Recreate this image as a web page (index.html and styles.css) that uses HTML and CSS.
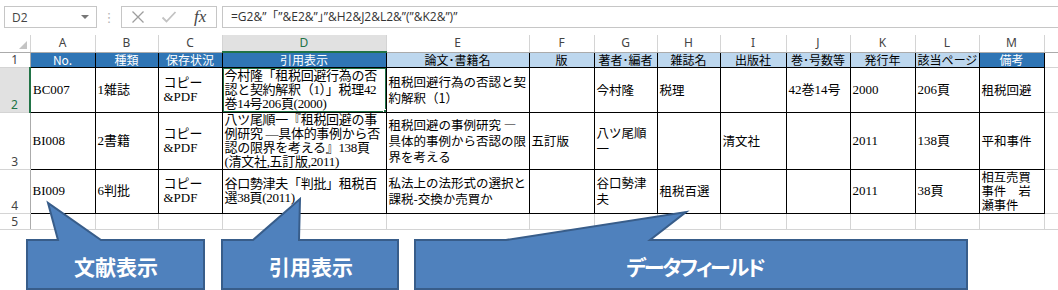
FILE: index.html
```html
<!DOCTYPE html>
<html lang="ja">

<head>
    <meta charset="UTF-8">
    <title>文献リスト - 引用表示</title>
    <link rel="stylesheet" href="styles.css">
</head>

<body>
    <div class="formula-bar">
        <div class="name-box"><span>D2</span><span class="name-arrow"></span></div>
        <div class="grip">⋮</div>
        <div class="fx-box">
            <svg class="icon-x" width="14" height="14" viewBox="0 0 14 14">
                <path d="M1.5 1.5 L12.5 12.5 M12.5 1.5 L1.5 12.5" />
            </svg>
            <svg class="icon-ok" width="16" height="14" viewBox="0 0 16 14">
                <path d="M1.5 7.5 L5.5 11.5 L14.5 2" />
            </svg>
            <span class="fx">fx</span>
        </div>
        <div class="formula-input">=G2&amp;”「”&amp;E2&amp;”」”&amp;H2&amp;J2&amp;L2&amp;”(”&amp;K2&amp;”)”</div>
    </div>

    <table class="sheet">
        <colgroup>
            <col style="width: 30px">
            <col style="width: 65px">
            <col style="width: 63px">
            <col style="width: 64px">
            <col style="width: 164px">
            <col style="width: 143px">
            <col style="width: 65px">
            <col style="width: 63px">
            <col style="width: 63px">
            <col style="width: 66px">
            <col style="width: 64px">
            <col style="width: 65px">
            <col style="width: 64px">
            <col style="width: 65px">
            <col style="width: 14px">
        </colgroup>
        <tr class="col-heads">
            <th class="corner"><span class="corner-tri"></span></th>
            <th>A</th>
            <th>B</th>
            <th>C</th>
            <th class="cur">D</th>
            <th>E</th>
            <th>F</th>
            <th>G</th>
            <th>H</th>
            <th>I</th>
            <th>J</th>
            <th>K</th>
            <th>L</th>
            <th>M</th>
            <th></th>
        </tr>
        <tr class="r1">
            <th class="rh">1</th>
            <td class="hd dk">No.</td>
            <td class="hd dk">種類</td>
            <td class="hd dk">保存状況</td>
            <td class="hd dk">引用表示</td>
            <td class="hd lt">論文･書籍名</td>
            <td class="hd lt">版</td>
            <td class="hd lt">著者･編者</td>
            <td class="hd lt">雑誌名</td>
            <td class="hd lt">出版社</td>
            <td class="hd lt">巻･号数等</td>
            <td class="hd lt">発行年</td>
            <td class="hd lt">該当ページ</td>
            <td class="hd dk">備考</td>
            <td class="gl"></td>
        </tr>
        <tr class="r2">
            <th class="rh cur">2</th>
            <td class="m">BC007</td>
            <td class="m">1雑誌</td>
            <td class="m pad">コピー<br>&amp;PDF</td>
            <td class="m cite sel">今村隆「租税回避行為の否<br>認と契約解釈（1）」税理42<br>巻14号206頁(2000)<span class="handle"></span></td>
            <td class="g">租税回避行為の否認と契<br>約解釈（1）</td>
            <td class="g"></td>
            <td class="g">今村隆</td>
            <td class="g">税理</td>
            <td class="g"></td>
            <td class="m">42巻14号</td>
            <td class="m">2000</td>
            <td class="m">206頁</td>
            <td class="g">租税回避</td>
            <td class="gl"></td>
        </tr>
        <tr class="r3">
            <th class="rh">3</th>
            <td class="m">BI008</td>
            <td class="m">2書籍</td>
            <td class="m pad">コピー<br>&amp;PDF</td>
            <td class="m cite">八ツ尾順一『租税回避の事<br>例研究 ―具体的事例から否<br>認の限界を考える』138頁<br>(清文社,五訂版,2011)</td>
            <td class="g">租税回避の事例研究 ―<br>具体的事例から否認の限<br>界を考える</td>
            <td class="g">五訂版</td>
            <td class="g">八ツ尾順<br>一</td>
            <td class="g"></td>
            <td class="g">清文社</td>
            <td class="m"></td>
            <td class="m">2011</td>
            <td class="m">138頁</td>
            <td class="g">平和事件</td>
            <td class="gl"></td>
        </tr>
        <tr class="r4">
            <th class="rh">4</th>
            <td class="m">BI009</td>
            <td class="m">6判批</td>
            <td class="m pad">コピー<br>&amp;PDF</td>
            <td class="m cite">谷口勢津夫「判批」租税百<br>選38頁(2011)</td>
            <td class="g">私法上の法形式の選択と<br>課税-交換か売買か</td>
            <td class="g"></td>
            <td class="g">谷口勢津<br>夫</td>
            <td class="g">租税百選</td>
            <td class="g"></td>
            <td class="m"></td>
            <td class="m">2011</td>
            <td class="m">38頁</td>
            <td class="g tight">相互売買<br>事件　岩<br>瀬事件</td>
            <td class="gl"></td>
        </tr>
        <tr class="r5">
            <th class="rh">5</th>
            <td class="gl"></td>
            <td class="gl"></td>
            <td class="gl"></td>
            <td class="gl"></td>
            <td class="gl"></td>
            <td class="gl"></td>
            <td class="gl"></td>
            <td class="gl"></td>
            <td class="gl"></td>
            <td class="gl"></td>
            <td class="gl"></td>
            <td class="gl"></td>
            <td class="gl"></td>
            <td class="gl"></td>
        </tr>
    </table>

    <!-- callouts sit on top of the sheet -->
    <svg class="callouts" width="1058" height="290" viewBox="0 0 1058 290">
        <path class="balloon" d="M27 240 L58 240 L48 203 L101 240 L204 240 L204 289 L27 289 Z" />
        <path class="balloon" d="M222 240 L253 240 L300 199 L299 240 L398 240 L398 289 L222 289 Z" />
        <path class="balloon" d="M415 240 L506 240 L686 212 L650 240 L967 240 L967 289 L415 289 Z" />
        <text class="balloon-text" x="116" y="266">文献表示</text>
        <text class="balloon-text" x="311" y="266">引用表示</text>
        <text class="balloon-text kana" x="695" y="266">データフィールド</text>
    </svg>
</body>

</html>
```

FILE: styles.css
```css
* {
    margin: 0;
    padding: 0;
    box-sizing: border-box;
}

body {
    width: 1058px;
    height: 290px;
    overflow: hidden;
    position: relative;
    background: #fff;
    font-family: "Noto Sans CJK JP", sans-serif;
    color: #000;
}

/* formula bar */
.formula-bar {
    display: flex;
    align-items: flex-start;
    height: 35px;
    padding: 6px 0 0 4px;
}

.name-box {
    width: 93px;
    height: 22px;
    border: 1px solid #c6c6c6;
    display: flex;
    align-items: center;
    justify-content: space-between;
    padding: 0 7px 0 7px;
    font-family: "Open Sans", sans-serif;
    font-size: 12px;
    color: #444;
}

.name-arrow {
    width: 0;
    height: 0;
    border-left: 4px solid transparent;
    border-right: 4px solid transparent;
    border-top: 4px solid #777;
}

.grip {
    width: 24px;
    height: 22px;
    display: flex;
    align-items: center;
    justify-content: center;
    color: #b5b5b5;
    font-size: 13px;
    font-family: "DejaVu Sans", sans-serif;
}

.fx-box {
    width: 96px;
    height: 22px;
    border: 1px solid #c6c6c6;
    display: flex;
    align-items: center;
    padding-left: 9px;
}

.icon-x path {
    fill: none;
    stroke: #9e9e9e;
    stroke-width: 1.3;
}

.icon-ok {
    margin-left: 16px;
}

.icon-ok path {
    fill: none;
    stroke: #c2c2c2;
    stroke-width: 1.8;
}

.fx {
    margin-left: 17px;
    font-family: "Liberation Serif", serif;
    font-style: italic;
    font-size: 17px;
    color: #444;
    line-height: 20px;
}

.formula-input {
    flex: 1;
    height: 22px;
    margin-left: 5px;
    border: 1px solid #c6c6c6;
    border-right: none;
    padding-left: 8px;
    font-family: "Open Sans", "Noto Sans CJK JP", sans-serif;
    font-size: 12px;
    line-height: 20px;
    color: #333;
    white-space: nowrap;
}

/* sheet grid */
.sheet {
    width: 1058px;
    border-collapse: collapse;
    table-layout: fixed;
}

.sheet th {
    font-family: "Noto Sans", sans-serif;
    font-weight: normal;
    font-size: 12px;
    color: #444;
    background: #fff;
    border: 1px solid #d4d4d4;
    line-height: 14px;
}

.col-heads {
    height: 17px;
}

.col-heads th {
    border-top: none;
    border-bottom: 1px solid #ababab;
}

.col-heads th.cur {
    background: #e1e1e1;
    color: #217346;
    border-bottom: 2px solid #217346;
}

.corner {
    position: relative;
    border-left: none !important;
}

.corner-tri {
    position: absolute;
    right: 3px;
    bottom: 3px;
    width: 0;
    height: 0;
    border-left: 8px solid transparent;
    border-bottom: 8px solid #c4c4c4;
}

.rh {
    vertical-align: bottom;
    text-align: center;
    border-left: none !important;
    border-right: 1px solid #ababab !important;
}

.rh.cur {
    background: #e1e1e1;
    color: #217346;
    border-right: 2px solid #217346 !important;
}

.r1 { height: 15px; }
.r2 { height: 45px; }
.r3 { height: 56px; }
.r4 { height: 44px; }
.r5 { height: 16px; }

.sheet td {
    border: 1px solid #000;
    padding: 0 2px;
    white-space: nowrap;
    overflow: hidden;
    vertical-align: middle;
}

.sheet td.gl {
    border-color: #d4d4d4;
}

.hd {
    text-align: center;
    font-size: 12px;
    line-height: 13px;
    font-feature-settings: "palt";
}

.hd.dk {
    background: #2f75b5;
    color: #fff;
}

.hd.lt {
    background: #bdd7ee;
}

/* mincho-looking cells */
.m {
    font-family: "Liberation Serif", "Noto Sans CJK JP", serif;
    font-size: 13px;
    line-height: 14px;
}

.cite {
    letter-spacing: -0.3px;
    padding-left: 2px;
    padding-right: 0;
}

/* gothic cells */
.g {
    font-size: 12.5px;
    line-height: 16px;
}

.g.tight {
    font-size: 12.3px;
    line-height: 14px;
}

.pad {
    padding-left: 5px !important;
}

.sel {
    position: relative;
}

.sel::after {
    content: "";
    position: absolute;
    left: -1px;
    top: -1px;
    right: -1px;
    bottom: -1px;
    border: 2px solid #217346;
}

.handle {
    position: absolute;
    right: -4px;
    bottom: -4px;
    width: 7px;
    height: 7px;
    background: #217346;
    border: 1px solid #fff;
    z-index: 1;
}

/* callout balloons */
.callouts {
    position: absolute;
    left: 0;
    top: 0;
    pointer-events: none;
}

.balloon {
    fill: #4f81bd;
    stroke: #385d8a;
    stroke-width: 2;
    stroke-linejoin: miter;
}

.balloon-text {
    font-family: "Noto Sans CJK JP", sans-serif;
    font-weight: bold;
    font-size: 21px;
    fill: #fff;
    text-anchor: middle;
    dominant-baseline: central;
}

.balloon-text.kana {
    font-feature-settings: "palt";
    letter-spacing: -2px;
}
```
